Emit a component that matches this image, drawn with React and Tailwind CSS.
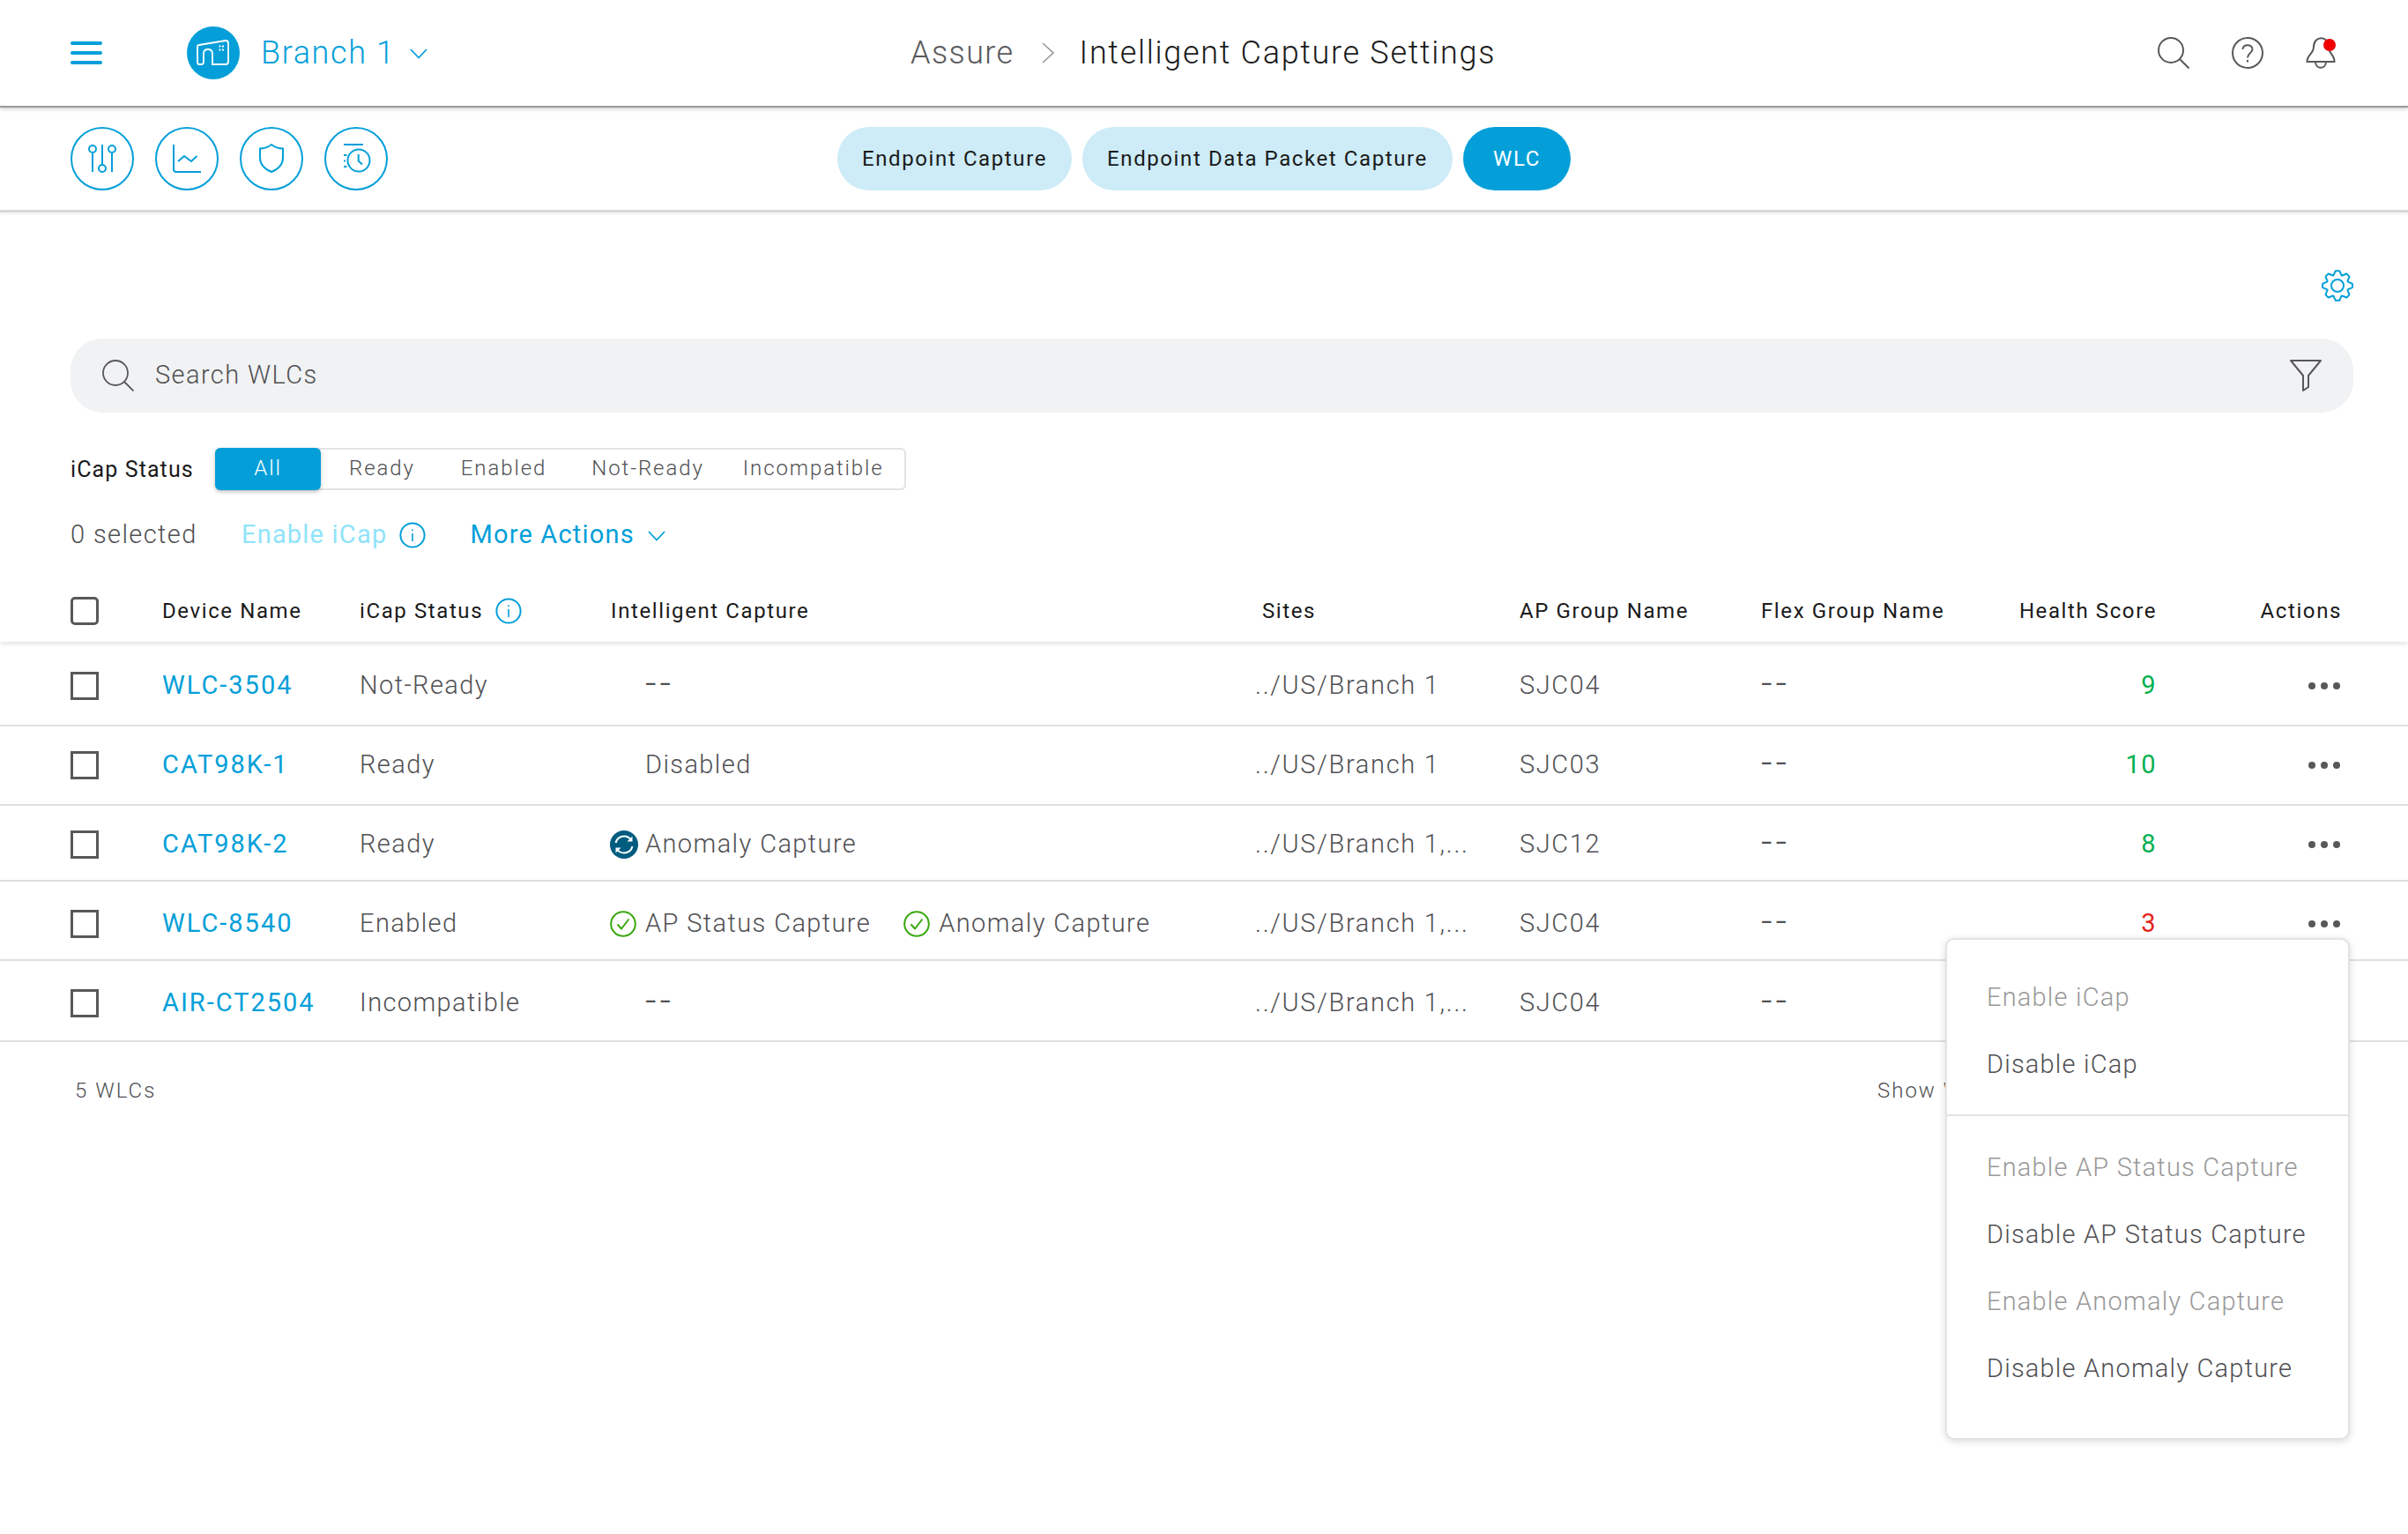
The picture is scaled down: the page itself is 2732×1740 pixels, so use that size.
import React from "react";

const blue = "#049fd9";

const gridCols = "grid grid-cols-[104px_224px_285px_731px_300px_274px_252px_197px_208px]";

const wlcRows = [
    { name: "WLC-3504", status: "Not-Ready", site: "../US/Branch 1", ap: "SJC04", score: "9", color: "text-[#00b050]", rowClass: "h-[96px] pt-[6px]", capture: "none" },
    { name: "CAT98K-1", status: "Ready", site: "../US/Branch 1", ap: "SJC03", score: "10", color: "text-[#00b050]", rowClass: "h-[90px]", capture: "disabled" },
    { name: "CAT98K-2", status: "Ready", site: "../US/Branch 1,...", ap: "SJC12", score: "8", color: "text-[#00b050]", rowClass: "h-[86px] pt-[3px]", capture: "sync" },
    { name: "WLC-8540", status: "Enabled", site: "../US/Branch 1,...", ap: "SJC04", score: "3", color: "text-[#e2231a]", rowClass: "h-[90px] pt-[7px]", capture: "both" },
    { name: "AIR-CT2504", status: "Incompatible", site: "../US/Branch 1,...", ap: "SJC04", score: "", color: "", rowClass: "h-[92px] pt-[5px]", capture: "none" },
];

function gearPoints() {
    const pts = [];
    for (let i = 0; i < 8; i++) {
        const a = (i * Math.PI) / 4 - Math.PI / 2;
        const at = (r, d) => `${(18 + r * Math.cos(a + d)).toFixed(2)},${(18 + r * Math.sin(a + d)).toFixed(2)}`;
        pts.push(at(12.6, -0.36), at(17, -0.13), at(17, 0.13), at(12.6, 0.36));
    }
    return pts.join(" ");
}

function CircleBtn({ children }) {
    return (
        <div className="w-[72px] h-[72px] rounded-full border-2 border-[#049fd9]">
            <svg width="72" height="72" viewBox="0 0 72 72" fill="none" stroke={blue} strokeWidth="2" className="-m-[2px]">
                {children}
            </svg>
        </div>
    );
}

function Chevron({ color = blue, size = 20 }) {
    return (
        <svg width={size} height={size * 0.6} viewBox="0 0 20 12" fill="none" stroke={color} strokeWidth="1.8">
            <path d="M1 1 L10 10.5 L19 1" />
        </svg>
    );
}

function InfoIcon() {
    return (
        <svg width="30" height="30" viewBox="0 0 30 30" fill="none" stroke={blue} strokeWidth="2">
            <circle cx="15" cy="15" r="13.6" />
            <path d="M15 13 V22" strokeWidth="1.6" />
            <path d="M15 8.4 V10" strokeWidth="1.8" />
        </svg>
    );
}

function CheckIcon() {
    return (
        <svg width="30" height="30" viewBox="0 0 30 30" fill="none" stroke="#39a70e" strokeWidth="2" className="shrink-0">
            <circle cx="15" cy="15" r="13.8" />
            <path d="M8.5 15.5 L13 20.5 L21.5 9.5" />
        </svg>
    );
}

function SyncIcon() {
    return (
        <svg width="32" height="32" viewBox="0 0 32 32" fill="none" className="shrink-0">
            <circle cx="16" cy="16" r="16" fill="#005c7f" />
            <path d="M6.5 14 C7.5 9 12 6.5 16 6.5 C19.5 6.5 22 8 24 10.5" stroke="#fff" strokeWidth="2" />
            <path d="M25.5 18 C24.5 23 20 25.5 16 25.5 C12.5 25.5 10 24 8 21.5" stroke="#fff" strokeWidth="2" />
            <path d="M25.5 6.5 V12.5 H19.5 Z M6.5 25.5 V19.5 H12.5 Z" fill="#fff" />
        </svg>
    );
}

function Box({ rounded }) {
    return <div className={rounded ? "w-[32px] h-[32px] border-[3px] border-[#58585b] rounded-[5px]" : "w-[32px] h-[32px] border-[3px] border-[#58585b]"}></div>;
}

function Dots() {
    return (
        <div className="flex gap-[6px] justify-end">
            <div className="w-[8px] h-[8px] rounded-full bg-[#58585b]"></div>
            <div className="w-[8px] h-[8px] rounded-full bg-[#58585b]"></div>
            <div className="w-[8px] h-[8px] rounded-full bg-[#58585b]"></div>
        </div>
    );
}

function DashDash() {
    return <span className="text-[44px] leading-none tracking-[4px]">--</span>;
}

function Capture({ kind }) {
    if (kind === "none") return <div className="pl-[39px]"><DashDash /></div>;
    if (kind === "disabled") return <span className="pl-[39px]">Disabled</span>;
    if (kind === "sync") {
        return (
            <div className="flex items-center gap-[8px] -ml-[1px]">
                <SyncIcon />
                <span>Anomaly Capture</span>
            </div>
        );
    }
    return (
        <div className="flex items-center -ml-[1px]">
            <CheckIcon />
            <span className="ml-[10px]">AP Status Capture</span>
            <div className="ml-[37px]"><CheckIcon /></div>
            <span className="ml-[10px]">Anomaly Capture</span>
        </div>
    );
}

function App() {
    return (
        <div className="relative h-[1740px] bg-white overflow-hidden font-['Roboto',sans-serif] font-light text-[#505053]">
            <div className="h-[122px] flex items-center border-b-2 border-[#9a9a9a] shadow-[0_2px_4px_rgba(0,0,0,0.18)]">
                <div className="w-[1033px] flex items-center pl-[80px] shrink-0">
                    <div className="w-[36px] flex flex-col gap-[7px]">
                        <div className="h-[4px] rounded-full bg-[#049fd9]"></div>
                        <div className="h-[4px] rounded-full bg-[#049fd9]"></div>
                        <div className="h-[4px] rounded-full bg-[#049fd9]"></div>
                    </div>
                    <svg width="60" height="60" viewBox="0 0 60 60" fill="none" className="ml-[96px]">
                        <circle cx="30" cy="30" r="30" fill={blue} />
                        <path d="M14 43 Q12 43 12 40 V23 Q12 21 14 21 L44 16 Q47 16 47 19 V40 Q47 43 44 43 H29 V31 Q29 26 24 26 Q19 26 19 31 V40 Q19 43 16.5 43 Z" stroke="#fff" strokeWidth="1.8" />
                        <path d="M36.5 21.5 h2 v2 h-2 z M40 21.5 h2 v2 h-2 z M36.5 25.5 h2 v2 h-2 z M40 25.5 h2 v2 h-2 z" fill="#fff" />
                    </svg>
                    <span className="ml-[24px] text-[36px] text-[#049fd9] tracking-[1.6px]">Branch 1</span>
                    <div className="ml-[17px] mt-[2px]"><Chevron /></div>
                </div>
                <span className="text-[36px] text-[#58585b] tracking-[1.4px]">Assure</span>
                <svg width="14" height="24" viewBox="0 0 14 24" fill="none" stroke="#999" strokeWidth="1.6" className="ml-[31px]">
                    <path d="M1 1 L13 12 L1 23" />
                </svg>
                <span className="ml-[29px] text-[36px] text-[#1a1a1a] tracking-[1.7px]">Intelligent Capture Settings</span>
                <div className="ml-auto pr-[82px] flex items-center gap-[48px]">
                    <svg width="36" height="36" viewBox="0 0 36 36" fill="none" stroke="#58585b" strokeWidth="2">
                        <circle cx="15" cy="15" r="14" />
                        <path d="M25 25 L35.5 35.5" />
                    </svg>
                    <svg width="36" height="36" viewBox="0 0 36 36" fill="none" stroke="#58585b" strokeWidth="2">
                        <circle cx="18" cy="18" r="17" />
                        <path d="M12.5 14 C12.5 7.5 23.5 7.5 23.5 14 C23.5 18 18 18 18 23.5" />
                        <path d="M18 26 V28.5" />
                    </svg>
                    <div className="relative w-[34px] h-[36px]">
                        <svg width="34" height="36" viewBox="0 0 34 36" fill="none" stroke="#58585b" strokeWidth="2">
                            <path d="M9 11 C9 -2 26 -2 26 11 C26 19 33 21 32.5 28 H1.5 C1 21 9 19 9 11 Z" />
                            <path d="M11 28 C11 37 23 37 23 28" />
                        </svg>
                        <div className="absolute left-[20px] top-[2px] w-[14px] h-[14px] rounded-full bg-[#f00000]"></div>
                    </div>
                </div>
            </div>

            <div className="h-[119px] flex items-center border-b-[3px] border-[#d8d8d8] shadow-[0_2px_3px_rgba(0,0,0,0.06)]">
                <div className="w-[950px] pl-[80px] flex gap-[24px] shrink-0">
                    <CircleBtn>
                        <circle cx="25" cy="25" r="4" />
                        <path d="M25 29 V51 M36 20 V43 M47 29 V51" />
                        <circle cx="36" cy="47" r="4" />
                        <circle cx="47" cy="25" r="4" />
                    </CircleBtn>
                    <CircleBtn>
                        <path d="M21 20 V48 Q21 51 24 51 H52" />
                        <path d="M26 39 L33 33 L41 39 L47.5 33" />
                    </CircleBtn>
                    <CircleBtn>
                        <path d="M36 20 C40 23 45 24.5 49 24.5 V35 C49 43 43 48 36 51 C29 48 23 43 23 35 V24.5 C27 24.5 32 23 36 20Z" />
                    </CircleBtn>
                    <CircleBtn>
                        <path d="M22 20 H44" />
                        <circle cx="39" cy="38" r="12.5" />
                        <path d="M38.7 31 V38.5 L43 42.5" />
                        <path d="M22 32 H25.5 M22 38.5 H24 M22 45 H25.5" />
                    </CircleBtn>
                </div>
                <div className="flex gap-[12px] text-[24px] font-normal tracking-[1.6px]">
                    <div className="w-[266px] h-[72px] rounded-full bg-[#cdecf7] text-[#1a1a1a] flex items-center justify-center">Endpoint Capture</div>
                    <div className="w-[420px] h-[72px] rounded-full bg-[#cdecf7] text-[#1a1a1a] flex items-center justify-center">Endpoint Data Packet Capture</div>
                    <div className="w-[122px] h-[72px] rounded-full bg-[#049fd9] text-white flex items-center justify-center">WLC</div>
                </div>
            </div>

            <div className="pl-[80px] pr-[62px]">
                <div className="flex justify-end mt-[65px]">
                    <svg width="36" height="36" viewBox="0 0 36 36" fill="none" stroke={blue} strokeWidth="2" strokeLinejoin="round">
                        <polygon points={gearPoints()} />
                        <circle cx="18" cy="18" r="7" />
                    </svg>
                </div>
                <div className="mt-[42px] h-[84px] rounded-[36px] bg-[#f1f2f4] flex items-center pl-[36px] pr-[36px]">
                    <svg width="36" height="36" viewBox="0 0 36 36" fill="none" stroke="#58585b" strokeWidth="1.8">
                        <circle cx="15" cy="15" r="14" />
                        <path d="M25 25 L35.5 35.5" />
                    </svg>
                    <span className="ml-[24px] text-[29px] tracking-[1.4px]">Search WLCs</span>
                    <svg width="36" height="36" viewBox="0 0 36 36" fill="none" stroke="#58585b" strokeWidth="2" strokeLinejoin="round" className="ml-auto">
                        <path d="M1 1 H35 L21 18 V31 L15 35 V18 Z" />
                    </svg>
                </div>

                <div className="mt-[40px] flex items-center h-[48px]">
                    <span className="w-[164px] text-[25px] font-normal text-[#1a1a1a] tracking-[1.1px] pt-[2px]">iCap Status</span>
                    <div className="w-[784px] h-[48px] flex items-center rounded-[6px] border-2 border-[#e3e3e3] text-[24px] tracking-[1.9px] pb-[2px]">
                        <div className="w-[120px] h-[48px] -ml-[2px] rounded-[6px] bg-[#049fd9] text-white flex items-center justify-center shadow-[0_2px_4px_rgba(0,0,0,0.25)] mt-[2px] pb-[2px]">All</div>
                        <span className="ml-[32px]">Ready</span>
                        <span className="ml-[52px]">Enabled</span>
                        <span className="ml-[51px]">Not-Ready</span>
                        <span className="ml-[44px]">Incompatible</span>
                    </div>
                </div>

                <div className="mt-[36px] h-[30px] flex items-center text-[29px] tracking-[1.4px]">
                    <span className="w-[194px]">0 selected</span>
                    <span className="text-[#8fe3fa] font-normal tracking-[1.2px]">Enable iCap</span>
                    <div className="ml-[14px]"><InfoIcon /></div>
                    <span className="ml-[50px] text-[#049fd9] font-normal tracking-[1.2px]">More Actions</span>
                    <div className="ml-[15px] mt-[2px]"><Chevron /></div>
                </div>
            </div>

            <div className={`${gridCols} items-center mt-[38px] h-[68px] pl-[80px] pb-[2px] text-[24px] font-normal text-[#1a1a1a] tracking-[1.6px] shadow-[0_3px_4px_rgba(0,0,0,0.1)]`}>
                <Box rounded />
                <span>Device Name</span>
                <div className="flex items-center gap-[14px]">
                    <span>iCap Status</span>
                    <InfoIcon />
                </div>
                <span>Intelligent Capture</span>
                <span className="pl-[8px]">Sites</span>
                <span>AP Group Name</span>
                <span>Flex Group Name</span>
                <span className="text-right">Health Score</span>
                <span className="text-right -mr-[2px]">Actions</span>
            </div>

            {wlcRows.map((row) => (
                <div key={row.name} className={`${gridCols} ${row.rowClass} items-center pl-[80px] text-[29px] tracking-[1.4px] border-b-2 border-[#dfdfdf]`}>
                    <Box />
                    <span className="text-[#049fd9] font-normal tracking-[2px]">{row.name}</span>
                    <span>{row.status}</span>
                    <Capture kind={row.capture} />
                    <span className="tracking-[1.7px]">{row.site}</span>
                    <span className="tracking-[1.6px]">{row.ap}</span>
                    <div><DashDash /></div>
                    <span className={`text-right font-normal ${row.color}`}>{row.score}</span>
                    <Dots />
                </div>
            ))}

            <div className="flex items-center justify-between mt-[37px] pl-[85px] pr-[400px] text-[24px] tracking-[2px]">
                <span>5 WLCs</span>
                <span className="w-[202px] whitespace-nowrap">Show WLCs</span>
            </div>

            <div className="absolute left-[2207px] top-[1064px] w-[459px] h-[569px] rounded-[10px] border-2 border-[#e3e3e3] bg-white shadow-[0_2px_8px_rgba(0,0,0,0.15)] text-[29px] tracking-[1.2px] pl-[45px]">
                <div className="h-[76px] mt-[28px] flex items-center text-[#999999]">Enable iCap</div>
                <div className="h-[76px] flex items-center">Disable iCap</div>
                <div className="-ml-[45px] mt-[18px] border-t-2 border-[#e3e3e3]"></div>
                <div className="h-[76px] mt-[21px] flex items-center text-[#999999]">Enable AP Status Capture</div>
                <div className="h-[76px] flex items-center">Disable AP Status Capture</div>
                <div className="h-[76px] flex items-center text-[#999999]">Enable Anomaly Capture</div>
                <div className="h-[76px] flex items-center">Disable Anomaly Capture</div>
            </div>
        </div>
    );
}

export default App;
